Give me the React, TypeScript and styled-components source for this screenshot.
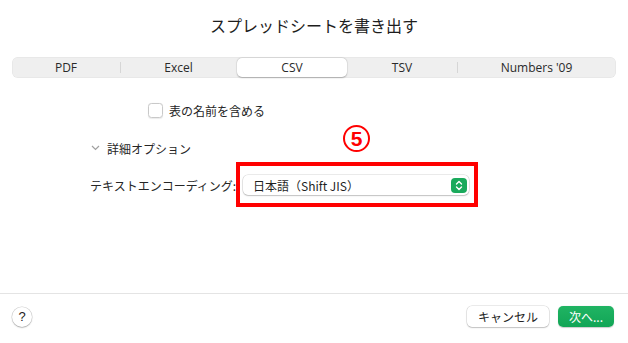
import React from 'react'
import styled, { createGlobalStyle } from 'styled-components'

const GlobalStyle = createGlobalStyle`
  html, body {
    margin: 0;
    padding: 0;
    background: #ffffff;
  }
  body {
    font-family: "Liberation Sans", "Noto Sans CJK JP", sans-serif;
    color: #222222;
  }
`

const Dialog = styled.div`
  width: 628px;
  height: 343px;
  display: flex;
  flex-direction: column;
  box-sizing: border-box;
  background: #ffffff;
`

const Title = styled.h1`
  margin: 14px 0 0;
  height: 22px;
  line-height: 22px;
  font-size: 16px;
  font-weight: normal;
  text-align: center;
  font-family: "Noto Sans CJK JP", sans-serif;
  color: #1d1d1d;
`

const Segments = styled.div`
  margin: 21px 12px 0;
  height: 21px;
  display: flex;
  align-items: stretch;
  background: #efefef;
  border-radius: 6px;
  box-shadow: inset 0 0 0 0.5px rgba(0, 0, 0, 0.06);
`

const Segment = styled.div<{ $w: number; $active?: boolean; $divider?: boolean }>`
  flex: 0 0 ${p => p.$w}px;
  position: relative;
  display: flex;
  align-items: center;
  justify-content: center;
  font-family: "Open Sans", "Liberation Sans", sans-serif;
  font-size: 12px;
  color: #2a2a2a;
  border-radius: 5px;
  margin: ${p => (p.$active ? '1px 0' : '0')};
  background: ${p => (p.$active ? '#ffffff' : 'transparent')};
  box-shadow: ${p =>
    p.$active ? '0 0.5px 1.5px rgba(0,0,0,0.25), 0 0 0 0.5px rgba(0,0,0,0.06)' : 'none'};

  &::before {
    content: '';
    display: ${p => (p.$divider ? 'block' : 'none')};
    position: absolute;
    left: 0;
    top: 5px;
    bottom: 5px;
    width: 1px;
    background: #d6d6d6;
  }
`

const Body = styled.div`
  flex: 1;
  display: flex;
  flex-direction: column;
  font-family: "Noto Sans CJK JP", sans-serif;
  font-size: 12px;
`

const CheckRow = styled.label`
  margin: 24px 0 0 148px;
  height: 16px;
  display: flex;
  align-items: center;
  gap: 6px;
  color: #262626;
`

const CheckBox = styled.span`
  width: 13px;
  height: 13px;
  border-radius: 3.5px;
  background: #ffffff;
  border: 1px solid #c9c9c9;
  box-shadow: 0 0.5px 1px rgba(0, 0, 0, 0.08);
`

const Disclosure = styled.div`
  margin: 22px 0 0 91px;
  height: 16px;
  display: flex;
  align-items: center;
  gap: 7px;
  color: #262626;
`

const EncodingRow = styled.div`
  margin: 19px 0 0 90px;
  display: flex;
  align-items: center;
  height: 20px;
`

const FieldLabel = styled.span`
  width: 153px;
  color: #262626;
  white-space: nowrap;
`

const PopupWrap = styled.div`
  position: relative;
`

const Popup = styled.div`
  width: 226px;
  height: 20px;
  box-sizing: border-box;
  display: flex;
  align-items: center;
  justify-content: space-between;
  padding: 0 2px 0 10px;
  background: #ffffff;
  border-radius: 5px;
  box-shadow: 0 0 0 0.5px rgba(0, 0, 0, 0.16), 0 1px 1.5px rgba(0, 0, 0, 0.18);
  color: #1f1f1f;
`

const Stepper = styled.span`
  width: 16px;
  height: 15px;
  border-radius: 4px;
  background: #1aaa5c;
  display: flex;
  align-items: center;
  justify-content: center;
`

const Highlight = styled.div`
  position: absolute;
  left: -7px;
  right: -9px;
  top: -13px;
  bottom: -12px;
  border: 4px solid #ff0000;
  pointer-events: none;
`

const StepNumber = styled.span`
  position: absolute;
  left: 100px;
  top: -50px;
  width: 23px;
  height: 23px;
  border: 2px solid #ff0000;
  border-radius: 50%;
  color: #ff0000;
  font-family: "Liberation Sans", sans-serif;
  font-weight: bold;
  font-size: 21px;
  line-height: 23px;
  text-align: center;
`

const Footer = styled.div`
  height: 50px;
  box-sizing: border-box;
  border-top: 1px solid #e4e4e4;
  display: flex;
  align-items: center;
  padding: 0 14px 4px 12px;
  gap: 9px;
`

const HelpButton = styled.button`
  width: 20px;
  height: 20px;
  border-radius: 50%;
  border: none;
  padding: 0;
  margin-right: auto;
  background: #ffffff;
  box-shadow: 0 0 0 0.5px rgba(0, 0, 0, 0.18), 0 1px 1.5px rgba(0, 0, 0, 0.2);
  font-family: "Liberation Sans", sans-serif;
  font-size: 13px;
  color: #222222;
`

const Button = styled.button<{ $primary?: boolean; $w: number }>`
  width: ${p => p.$w}px;
  height: 21px;
  border: none;
  border-radius: 5px;
  padding: 0;
  font-family: "Noto Sans CJK JP", sans-serif;
  font-size: 12px;
  color: ${p => (p.$primary ? '#ffffff' : '#222222')};
  background: ${p => (p.$primary ? 'linear-gradient(#20b463, #12a556)' : '#ffffff')};
  box-shadow: ${p =>
    p.$primary
      ? '0 0.5px 1px rgba(0,0,0,0.2)'
      : '0 0 0 0.5px rgba(0,0,0,0.16), 0 1px 1.5px rgba(0,0,0,0.18)'};
`

const tabs = [
  { name: 'PDF', w: 108 },
  { name: 'Excel', w: 117 },
  { name: 'CSV', w: 110, active: true },
  { name: 'TSV', w: 110 },
  { name: "Numbers '09", w: 159, divider: true },
]

export default function App() {
  return (
    <>
      <GlobalStyle />
      <Dialog>
        <Title>スプレッドシートを書き出す</Title>

        <Segments>
          {tabs.map((t, i) => (
            <Segment key={t.name} $w={t.w} $active={t.active} $divider={i === 1 || t.divider}>
              {t.name}
            </Segment>
          ))}
        </Segments>

        <Body>
          <CheckRow>
            <CheckBox />
            表の名前を含める
          </CheckRow>

          <Disclosure>
            <svg width="9" height="6" viewBox="0 0 9 6">
              <polyline points="1,1 4.5,4.5 8,1" fill="none" stroke="#a0a0a0" strokeWidth="1.2" />
            </svg>
            詳細オプション
          </Disclosure>

          <EncodingRow>
            <FieldLabel>テキストエンコーディング:</FieldLabel>
            <PopupWrap>
              <Popup>
                日本語（Shift JIS）
                <Stepper>
                  <svg width="8" height="11" viewBox="0 0 8 11">
                    <polyline points="1.5,4 4,1.5 6.5,4" fill="none" stroke="#fff" strokeWidth="1.4" strokeLinecap="round" strokeLinejoin="round" />
                    <polyline points="1.5,7 4,9.5 6.5,7" fill="none" stroke="#fff" strokeWidth="1.4" strokeLinecap="round" strokeLinejoin="round" />
                  </svg>
                </Stepper>
              </Popup>
              <Highlight />
              <StepNumber>5</StepNumber>
            </PopupWrap>
          </EncodingRow>
        </Body>

        <Footer>
          <HelpButton>?</HelpButton>
          <Button $w={82}>キャンセル</Button>
          <Button $w={56} $primary>次へ...</Button>
        </Footer>
      </Dialog>
    </>
  )
}
